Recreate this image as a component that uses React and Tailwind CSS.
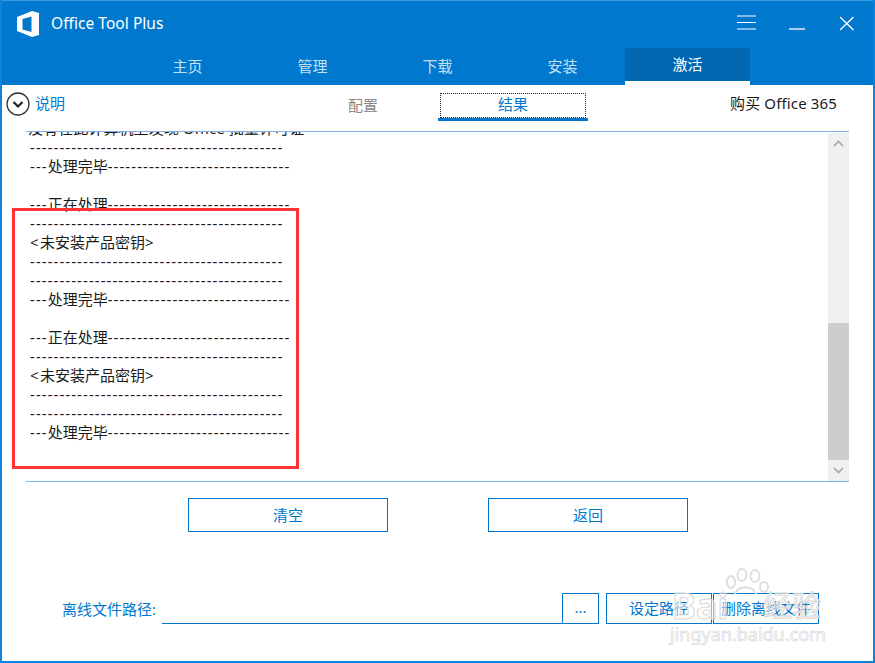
const FONT = "font-['Noto_Sans','Noto_Sans_CJK_SC',sans-serif]";

function Dashes({ n }) {
  return <span className="tracking-[1.06px]">{"-".repeat(n)}</span>;
}

function Angle({ children }) {
  return <span className="tracking-[1.5px]">{children}</span>;
}

const LINES = [
  { t: "没有在此计算机上发现 Office 批量许可证", shift: true },
  { d: 43 },
  { pre: "处理完毕" },
  {},
  { pre: "正在处理" },
  { d: 43 },
  { key: true },
  { d: 43 },
  { d: 43 },
  { pre: "处理完毕" },
  {},
  { pre: "正在处理" },
  { d: 43 },
  { key: true },
  { d: 43 },
  { d: 43 },
  { pre: "处理完毕" },
];

function Line({ l }) {
  if (l.shift) return <div className="h-[19px] -ml-[2px] tracking-[0.08px]">{l.t}</div>;
  if (l.key)
    return (
      <div className="h-[19px]">
        <Angle>{"<"}</Angle>未安装产品密钥<Angle>{">"}</Angle>
      </div>
    );
  if (l.d) return <div className="h-[19px]"><Dashes n={l.d} /></div>;
  if (l.pre)
    return (
      <div className="h-[19px]">
        <Dashes n={3} />
        {l.pre}
        <Dashes n={31} />
      </div>
    );
  return <div className="h-[19px]" />;
}

function OutlineButton({ className, children }) {
  return (
    <div className={"flex items-center justify-center border border-[#0078d0] text-[15px] text-[#0078d0] " + className}>
      {children}
    </div>
  );
}

const TABS = ["主页", "管理", "下载", "安装"];

export default function App() {
  return (
    <div className={"relative flex h-[663px] w-[875px] flex-col overflow-hidden border-2 border-t-0 border-[#0a84dc] bg-white " + FONT}>
      {/* Title bar */}
      <div className="flex h-[48px] items-center border-t border-[#3a9ce0] bg-[#0078ce] -mx-[2px] px-[2px] text-white">
        <svg width="22" height="26" viewBox="0 0 22 26" className="ml-[15px] -mt-[1px]">
          <path fill="#fff" fillRule="evenodd" d="M0 6 15 0 22 2V24L15 26 0 20ZM5.5 8 14.5 5.5V21L5.5 18.5Z" />
        </svg>
        <span className="ml-[12px] -mt-[1px] text-[15.5px] tracking-[0.05px]">Office Tool Plus</span>
        <svg width="132" height="20" viewBox="0 0 132 20" className="ml-auto mr-[16px] -mt-[1px]">
          <path stroke="#fff" strokeWidth="1.2" fill="none" d="M12 2H31M12 8.5H31M12 15H31" />
          <path stroke="#cfe6f7" strokeWidth="1.6" fill="none" d="M64 15H80" />
          <path stroke="#fff" strokeWidth="1.3" fill="none" d="M115 3 128.5 16M128.5 3 115 16" />
        </svg>
      </div>

      {/* Tabs */}
      <div className="flex h-[37px] bg-[#0078ce] -mx-[2px] pl-[125px]">
        {TABS.map((t) => (
          <div key={t} className="flex w-[125px] items-center justify-center text-[15px] text-[#c4e0f5]">
            {t}
          </div>
        ))}
        <div className="flex h-[37px] w-[125px] flex-col">
          <div className="flex h-[33px] items-center justify-center bg-[#0067b0] text-[15px] text-white">激活</div>
          <div className="h-[4px] bg-white" />
        </div>
      </div>

      {/* Sub bar */}
      <div className="flex h-[46px] shrink-0">
        <div className="flex h-[37px] w-[64px] items-center pl-[4px]">
          <svg width="24" height="24" viewBox="0 0 24 24" className="shrink-0">
            <circle cx="12" cy="12" r="11" fill="none" stroke="#333" strokeWidth="1.3" />
            <path d="M7.5 10 12 14.5 16.5 10" fill="none" stroke="#222" strokeWidth="2.2" />
          </svg>
          <span className="ml-[5px] shrink-0 -mt-[1px] text-[15px] text-[#0078d0]">说明</span>
        </div>
        <div className="ml-[282px] flex h-[40px] w-[30px] items-center justify-center text-[15px] text-[#888888]">配置</div>
        <div className="ml-[60px] mt-[8px] flex h-[28px] w-[150px] flex-col border-b-[3px] border-[#0078ce] px-[2px]">
          <div className="flex h-[25px] items-center justify-center border border-dotted border-[#222] pb-[2px] text-[15px] text-[#0078d0]">结果</div>
        </div>
        <div className="ml-[142px] flex h-[37px] items-center text-[15px] tracking-[0.15px] text-[#1a1a1a]">购买 Office 365</div>
      </div>

      {/* Log panel */}
      <div className="ml-[24px] mr-[24px] flex h-[351px] shrink-0 border-y border-[#7fb2e8]">
        <div className="min-w-0 flex-1 overflow-hidden pl-[4px] text-[15px] leading-[19px] text-[#1a1a1a]">
          <div className="-mt-[13px] whitespace-nowrap">
            {LINES.map((l, i) => (
              <Line key={i} l={l} />
            ))}
          </div>
        </div>
        <div className="mt-[1px] flex w-[21px] shrink-0 flex-col bg-[#f0f0f0]">
          <div className="flex h-[20px] items-center justify-center">
            <svg width="11" height="7" viewBox="0 0 11 7"><path d="M1 6 5.5 1.5 10 6" fill="none" stroke="#a6a6a6" strokeWidth="1.6" /></svg>
          </div>
          <div className="mt-[170px] h-[137px] bg-[#cdcdcd]" />
          <div className="flex h-[20px] items-center justify-center">
            <svg width="11" height="7" viewBox="0 0 11 7"><path d="M1 1 5.5 5.5 10 1" fill="none" stroke="#a6a6a6" strokeWidth="1.6" /></svg>
          </div>
        </div>
      </div>

      {/* Actions */}
      <div className="mt-[16px] flex gap-[100px] pl-[186px]">
        <OutlineButton className="h-[34px] w-[200px]">清空</OutlineButton>
        <OutlineButton className="h-[34px] w-[200px]">返回</OutlineButton>
      </div>

      {/* Offline path */}
      <div className="mt-[60px] flex h-[32px] items-end pl-[60px]">
        <span className="mb-[4px] w-[100px] whitespace-nowrap text-[15px] text-[#0078d0]">离线文件路径:</span>
        <div className="h-[1px] w-[400px] bg-[#0078d0]" />
        <OutlineButton className="h-[31px] w-[37px] pb-[2px]">...</OutlineButton>
        <OutlineButton className="ml-[7px] h-[31px] w-[106px]">设定路径</OutlineButton>
        <OutlineButton className="ml-[1px] h-[31px] w-[106px] whitespace-nowrap">删除离线文件</OutlineButton>
      </div>

      {/* Red annotation */}
      <div className="absolute left-[10px] top-[208px] h-[261px] w-[287px] border-[3px] border-[#ff3333]" />

      {/* Watermark */}
      <div className="pointer-events-none absolute left-[668px] top-[568px] h-[78px] w-[160px]">
        <svg width="46" height="30" viewBox="0 0 46 30" className="absolute left-[53px] top-0" fill="none" stroke="#dedede" strokeWidth="2">
          <ellipse cx="8" cy="14" rx="4" ry="6" />
          <ellipse cx="19" cy="7" rx="4.5" ry="6" />
          <ellipse cx="32" cy="8" rx="4.5" ry="6" />
          <ellipse cx="41" cy="19" rx="4" ry="5" />
          <path d="M12 26C15 17 30 17 33 26" />
        </svg>
        <span className="absolute left-[2px] top-[20px] text-[36px] font-bold leading-[36px] text-white/50 [-webkit-text-stroke:1px_#d8d8d8]">Bai</span>
        <span className="absolute left-[93px] top-[22px] text-[29px] leading-[32px] text-white/50 [-webkit-text-stroke:1px_#d8d8d8]">经验</span>
        <span className="absolute left-[0px] top-[55px] text-[18px] leading-[22px] text-white/50 [-webkit-text-stroke:0.7px_#d8d8d8]">jingyan.baidu.com</span>
      </div>
    </div>
  );
}
